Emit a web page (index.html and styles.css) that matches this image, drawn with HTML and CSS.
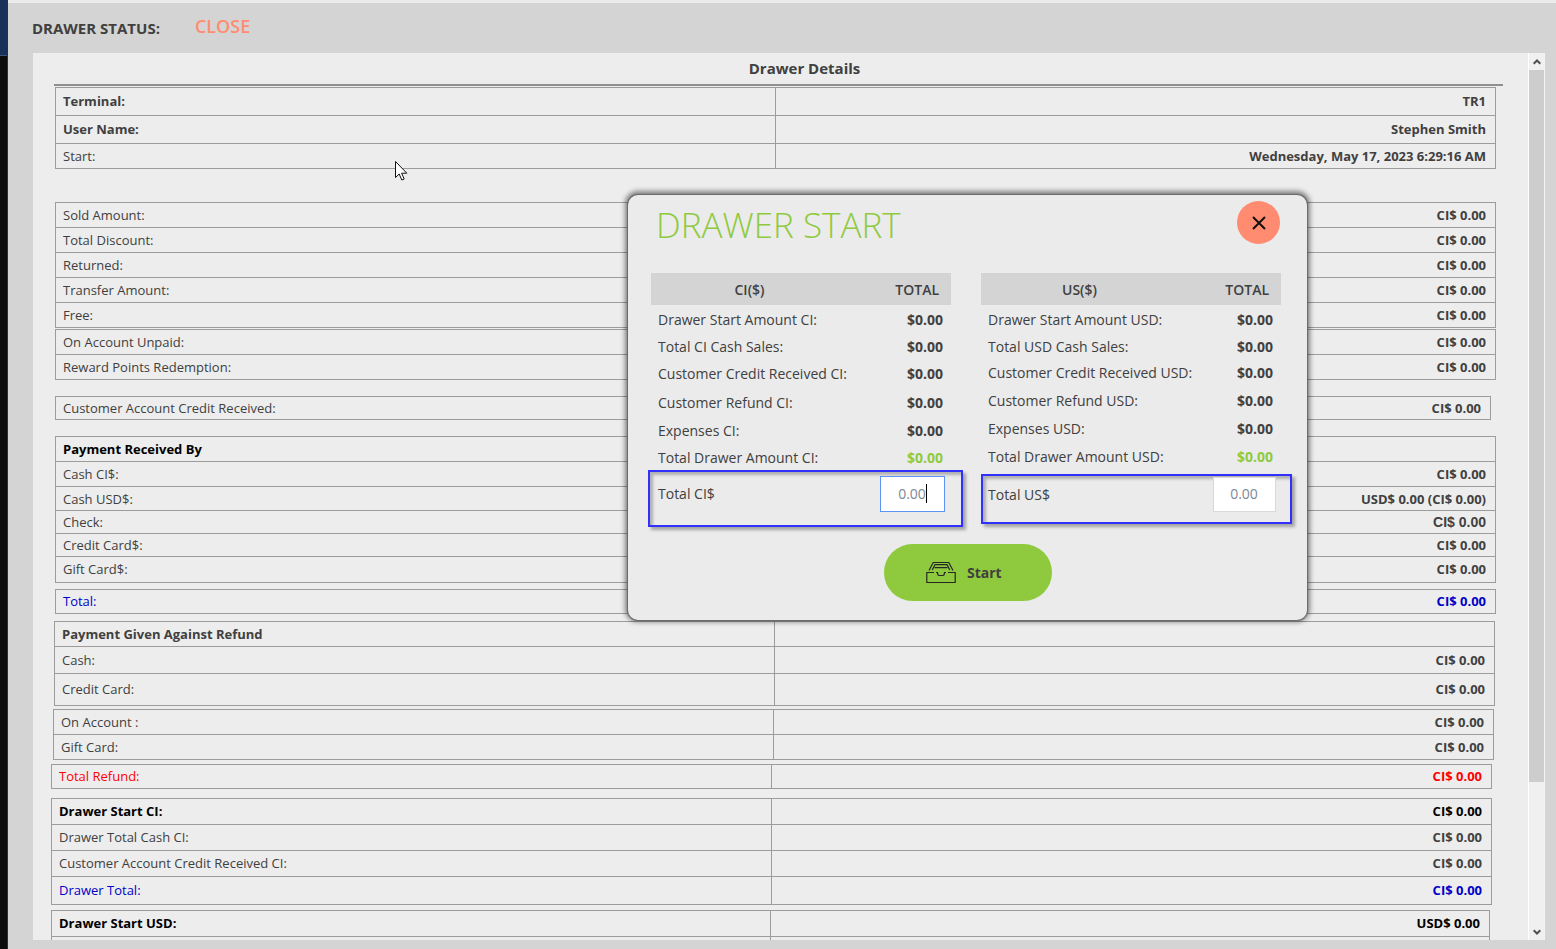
FILE: index.html
```html
<!DOCTYPE html>
<html lang="en">
<head>
<meta charset="utf-8">
<title>Drawer Details</title>
<link rel="stylesheet" href="styles.css">
</head>
<body>
<div class="app">
  <div class="edge"><div class="edge-top"></div></div>
  <main class="window">
    <header class="status">
      <span class="status-label">DRAWER STATUS:</span>
      <span class="status-value">CLOSE</span>
    </header>
    <div class="panel">
      <div class="report">
        <h1 class="report-title">Drawer Details</h1>
        <table class="grid">
          <tr class="h28"><th>Terminal:</th><td>TR1</td></tr>
          <tr class="h28"><th>User Name:</th><td>Stephen Smith</td></tr>
          <tr class="h25"><th class="plain">Start:</th><td>Wednesday, May 17, 2023 6:29:16 AM</td></tr>
        </table>
        <table class="grid gap-xl">
          <tr class="h25"><th class="plain">Sold Amount:</th><td>CI$ 0.00</td></tr>
          <tr class="h25"><th class="plain">Total Discount:</th><td>CI$ 0.00</td></tr>
          <tr class="h25"><th class="plain">Returned:</th><td>CI$ 0.00</td></tr>
          <tr class="h25"><th class="plain">Transfer Amount:</th><td>CI$ 0.00</td></tr>
          <tr class="h25"><th class="plain">Free:</th><td>CI$ 0.00</td></tr>
        </table>
        <table class="grid gap-xs">
          <tr class="h25"><th class="plain">On Account Unpaid:</th><td>CI$ 0.00</td></tr>
          <tr class="h25"><th class="plain">Reward Points Redemption:</th><td>CI$ 0.00</td></tr>
        </table>
        <div class="narrow"><table class="grid gap-l">
          <tr class="h23"><th class="plain">Customer Account Credit Received:</th><td>CI$ 0.00</td></tr>
        </table></div>
        <table class="grid gap-l">
          <tr class="h25 black"><th>Payment Received By</th><td></td></tr>
          <tr class="h25"><th class="plain">Cash CI$:</th><td>CI$ 0.00</td></tr>
          <tr class="h24"><th class="plain">Cash USD$:</th><td>USD$ 0.00 (CI$ 0.00)</td></tr>
          <tr class="h23"><th class="plain">Check:</th><td class="check">CI$ 0.00</td></tr>
          <tr class="h23"><th class="plain">Credit Card$:</th><td>CI$ 0.00</td></tr>
          <tr class="h26"><th class="plain">Gift Card$:</th><td>CI$ 0.00</td></tr>
        </table>
        <table class="grid gap-m">
          <tr class="h24 blue"><th class="plain">Total:</th><td>CI$ 0.00</td></tr>
        </table>
        <div class="out-1"><table class="grid gap-m">
          <tr class="h25"><th>Payment Given Against Refund</th><td></td></tr>
          <tr class="h27"><th class="plain">Cash:</th><td>CI$ 0.00</td></tr>
          <tr class="h32"><th class="plain">Credit Card:</th><td>CI$ 0.00</td></tr>
        </table></div>
        <div class="out-2"><table class="grid gap-s">
          <tr class="h25"><th class="plain">On Account :</th><td>CI$ 0.00</td></tr>
          <tr class="h25"><th class="plain">Gift Card:</th><td>CI$ 0.00</td></tr>
        </table></div>
        <div class="out-4"><table class="grid gap-s">
          <tr class="h24 red"><th class="plain">Total Refund:</th><td>CI$ 0.00</td></tr>
        </table></div>
        <div class="out-4"><table class="grid gap-ml">
          <tr class="h26 black"><th>Drawer Start CI:</th><td>CI$ 0.00</td></tr>
          <tr class="h26"><th class="plain">Drawer Total Cash CI:</th><td>CI$ 0.00</td></tr>
          <tr class="h26"><th class="plain">Customer Account Credit Received CI:</th><td>CI$ 0.00</td></tr>
          <tr class="h28 blue"><th class="plain">Drawer Total:</th><td>CI$ 0.00</td></tr>
        </table></div>
        <div class="out-4 short"><table class="grid gap-sm">
          <tr class="h26 black"><th>Drawer Start USD:</th><td>USD$ 0.00</td></tr>
          <tr class="h26"><th></th><td></td></tr>
        </table></div>
      </div>
      <div class="scrollbar">
        <button class="scroll-btn" aria-label="Scroll up"><svg width="8" height="8" viewBox="0 0 8 8"><path d="M.7 5.800 4 2.500l3.300 3.300" fill="none" stroke="#505050" stroke-width="2"/></svg></button>
        <div class="track"><div class="thumb"></div></div>
        <button class="scroll-btn" aria-label="Scroll down"><svg width="8" height="8" viewBox="0 0 8 8"><path d="M.7 2.200 4 5.500l3.300-3.300" fill="none" stroke="#505050" stroke-width="2"/></svg></button>
      </div>
    </div>
  </main>

  <section class="dialog" role="dialog" aria-labelledby="dlg-title">
    <div class="dialog-head">
      <h2 id="dlg-title">DRAWER START</h2>
      <button class="close" aria-label="Close"><svg width="14" height="14" viewBox="0 0 14 14"><path d="M1 1 13 13M13 1 1 13" fill="none" stroke="#111" stroke-width="2"/></svg></button>
    </div>
    <div class="columns">
      <div class="col">
        <table class="sums">
          <thead><tr><th>CI($)</th><th>TOTAL</th></tr></thead>
          <tbody>
            <tr class="h30"><td>Drawer Start Amount CI:</td><td>$0.00</td></tr>
            <tr class="h24"><td>Total CI Cash Sales:</td><td>$0.00</td></tr>
            <tr class="h30"><td>Customer Credit Received CI:</td><td>$0.00</td></tr>
            <tr class="h28"><td>Customer Refund CI:</td><td>$0.00</td></tr>
            <tr class="h28"><td>Expenses CI:</td><td>$0.00</td></tr>
            <tr class="h26 green"><td>Total Drawer Amount CI:</td><td>$0.00</td></tr>
          </tbody>
        </table>
        <div class="field field-ci">
          <label for="ci">Total CI$</label>
          <div class="box active"><input id="ci" type="text" value="0.00"><span class="caret"></span></div>
        </div>
      </div>
      <div class="col">
        <table class="sums">
          <thead><tr><th>US($)</th><th>TOTAL</th></tr></thead>
          <tbody>
            <tr class="h30"><td>Drawer Start Amount USD:</td><td>$0.00</td></tr>
            <tr class="h24"><td>Total USD Cash Sales:</td><td>$0.00</td></tr>
            <tr class="h28"><td>Customer Credit Received USD:</td><td>$0.00</td></tr>
            <tr class="h28"><td>Customer Refund USD:</td><td>$0.00</td></tr>
            <tr class="h28"><td>Expenses USD:</td><td>$0.00</td></tr>
            <tr class="h28 green"><td>Total Drawer Amount USD:</td><td>$0.00</td></tr>
          </tbody>
        </table>
        <div class="field field-us">
          <label for="us">Total US$</label>
          <div class="box"><input id="us" type="text" value="0.00"></div>
        </div>
      </div>
    </div>
    <button class="start">
      <svg width="30" height="24" viewBox="0 0 30 24" fill="none" stroke="#262626" stroke-width="1.200">
        <path d="M3 9.500 7.200 1.500h15.600L27 9.500M6.200 9 9 3.600h12L23.800 9M8.600 6.600h12.800"/>
        <path d="M8 11.500H.8v10h28.400v-10H22M10 11.500h1.500c0 2 .5 3 1.700 3h3.600c1.200 0 1.700-1 1.700-3H20"/>
      </svg>
      <span>Start</span>
    </button>
  </section>
  <svg class="pointer" width="13" height="20" viewBox="0 0 13 20"><path d="M.5.5v16l3.700-3.500 2.600 6 2.400-1-2.600-5.800h5.200z" fill="#fff" stroke="#111"/></svg>
</div>
</body>
</html>
```
FILE: styles.css
```css
* { box-sizing: border-box; }
body {
  margin: 0;
  font-family: "Open Sans", "Noto Sans", sans-serif;
  font-size: 13px;
  line-height: 18px;
  color: #404040;
}
button, input { font: inherit; color: inherit; }
button { border: 0; padding: 0; }
svg { display: block; }

.app { position: relative; display: flex; height: 100vh; overflow: hidden; background: #d4d4d4; }
.edge { flex: 0 0 8px; background: #0c0c0c; border-right: 1px solid #303030; }
.edge-top { height: 56px; background: #19315a; border-bottom: 1px solid #3a5683; }
.window { flex: 1; min-width: 0; display: flex; flex-direction: column; border-top: 3px solid #ebebeb; padding: 0 11px 9px 24px; }

.status { flex: 0 0 50px; display: flex; gap: 35px; align-items: flex-start; font-weight: 600; }
.status-label { font-size: 15px; line-height: 20px; padding-top: 15px; font-weight: 700; }
.status-value { font-size: 18px; line-height: 24px; padding-top: 11px; color: #ff8c70; }

.panel { flex: 1; min-height: 0; display: flex; margin-left: 1px; background: #ededed; }
.report { flex: 1; min-width: 0; overflow: hidden; padding: 0 32px 0 22px; }
.report-title {
  margin: 0 -7px 1px -1px;
  height: 33px;
  padding: 5px 0 0 52px;
  border-bottom: 2px solid #8f8f8f;
  font-size: 15px;
  line-height: 20px;
  font-weight: 700;
  text-align: center;
}

.grid { width: 100%; table-layout: fixed; border-collapse: separate; border-spacing: 0; border-top: 1px solid #9c9c9c; border-left: 1px solid #9c9c9c; }
.grid th, .grid td { padding: 0 9px 0 7px; border-right: 1px solid #9c9c9c; border-bottom: 1px solid #9c9c9c; line-height: 18px; }
.grid th { text-align: left; font-weight: 700; }
.grid th.plain { font-weight: 400; }
.grid td { text-align: right; font-weight: 700; }
.grid td.check { font-family: "Liberation Sans", Arial, sans-serif; font-size: 14px; }
.grid .h26 > *, .grid .h28 > *, .grid .h32 > *, .grid .blue > *, .grid .red > * { padding-bottom: 1px; }
.h23 { height: 23px; }
.h24 { height: 24px; }
.h25 { height: 25px; }
.h26 { height: 26px; }
.h27 { height: 27px; }
.h28 { height: 28px; }
.h30 { height: 30px; }
.h32 { height: 32px; }
.black { color: #000; }
.blue { color: #0000c8; }
.red { color: #f00; }

.gap-xs { margin-top: 1px; }
.gap-s { margin-top: 3px; }
.out-4 .gap-s { margin-top: 4px; }
.gap-sm { margin-top: 5px; }
.gap-m { margin-top: 6px; }
.out-1 .gap-m { margin-top: 7px; }
.gap-ml { margin-top: 9px; }
.gap-l { margin-top: 16px; }
.gap-xl { margin-top: 33px; }
.narrow { margin-right: 5px; }
.out-1 { margin: 0 1px 0 -1px; }
.out-2 { margin: 0 2px 0 -2px; }
.out-4 { margin: 0 4px 0 -4px; }
.out-4.short { margin-right: 6px; }

.scrollbar { flex: 0 0 17px; display: flex; flex-direction: column; background: #f0f0f0; border-left: 1px solid #fff; border-right: 1px solid #f4f4f4; }
.scroll-btn { flex: 0 0 17px; display: flex; align-items: center; justify-content: center; background: none; }
.track { flex: 1; }
.thumb { height: 83.5%; background: #cdcdcd; }

.dialog {
  position: absolute;
  left: 628px;
  top: 195px;
  width: 679px;
  padding: 6px 26px 19px 23px;
  border-radius: 10px;
  background: #ebebeb;
  box-shadow: 0 0 1px 1px #666, 0 -1px 5px 3px rgba(0, 0, 0, .45);
}
.dialog-head { display: flex; justify-content: space-between; align-items: flex-start; height: 72px; padding: 0 1px 0 5px; }
.dialog h2 { margin: 0; font-size: 35px; line-height: 48px; font-weight: 300; color: #8fca3e; }
.close { width: 43px; height: 43px; border-radius: 50%; background: #ff8c70; display: flex; align-items: center; justify-content: center; }
.columns { display: grid; grid-template-columns: 1fr 1fr; gap: 30px; font-size: 14px; height: 271px; }
.sums { width: 100%; table-layout: fixed; border-collapse: separate; border-spacing: 0; }
.sums th { height: 32px; padding: 1px 0 0; background: #d4d4d4; font-weight: 600; }
.sums th:first-child { width: 197px; }
.sums th:last-child { text-align: right; padding-right: 12px; }
.sums td { padding: 0 8px 0 7px; line-height: 20px; white-space: nowrap; }
.sums td:last-child { text-align: right; font-weight: 700; }
.green td:last-child { color: #8fca3e; }

.field {
  display: flex;
  justify-content: space-between;
  align-items: flex-start;
  border: 2px solid #3030ff;
  box-shadow: 3px 3px 3px rgba(0, 0, 0, .3), inset 3px 3px 3px rgba(0, 0, 0, .25);
}
.field-ci { margin: -1px -12px 0 -3px; height: 57px; padding: 4px 16px 0 8px; }
.field-us { margin: 3px -11px 0 0; height: 50px; padding: 1px 14px 0 5px; }
.field label { line-height: 20px; padding-top: 8px; }
.box { position: relative; width: 63px; height: 35px; }
.box.active { width: 65px; height: 36px; }
.box input { width: 100%; height: 100%; padding: 0 1px 2px 0; border: 1px solid #d9d9d9; background: #fff; color: #7c8794; text-align: center; outline: 0; }
.box.active input { border-color: #5a95f5; }
.caret { position: absolute; left: 46px; top: 8px; width: 1px; height: 19px; background: #000; }

.start {
  display: flex;
  align-items: center;
  gap: 11px;
  width: 168px;
  height: 57px;
  margin-left: 233px;
  padding-left: 42px;
  border-radius: 29px;
  background: #8fca3e;
  font-size: 14px;
  font-weight: 700;
}
.pointer { position: absolute; left: 395px; top: 161px; }
```
